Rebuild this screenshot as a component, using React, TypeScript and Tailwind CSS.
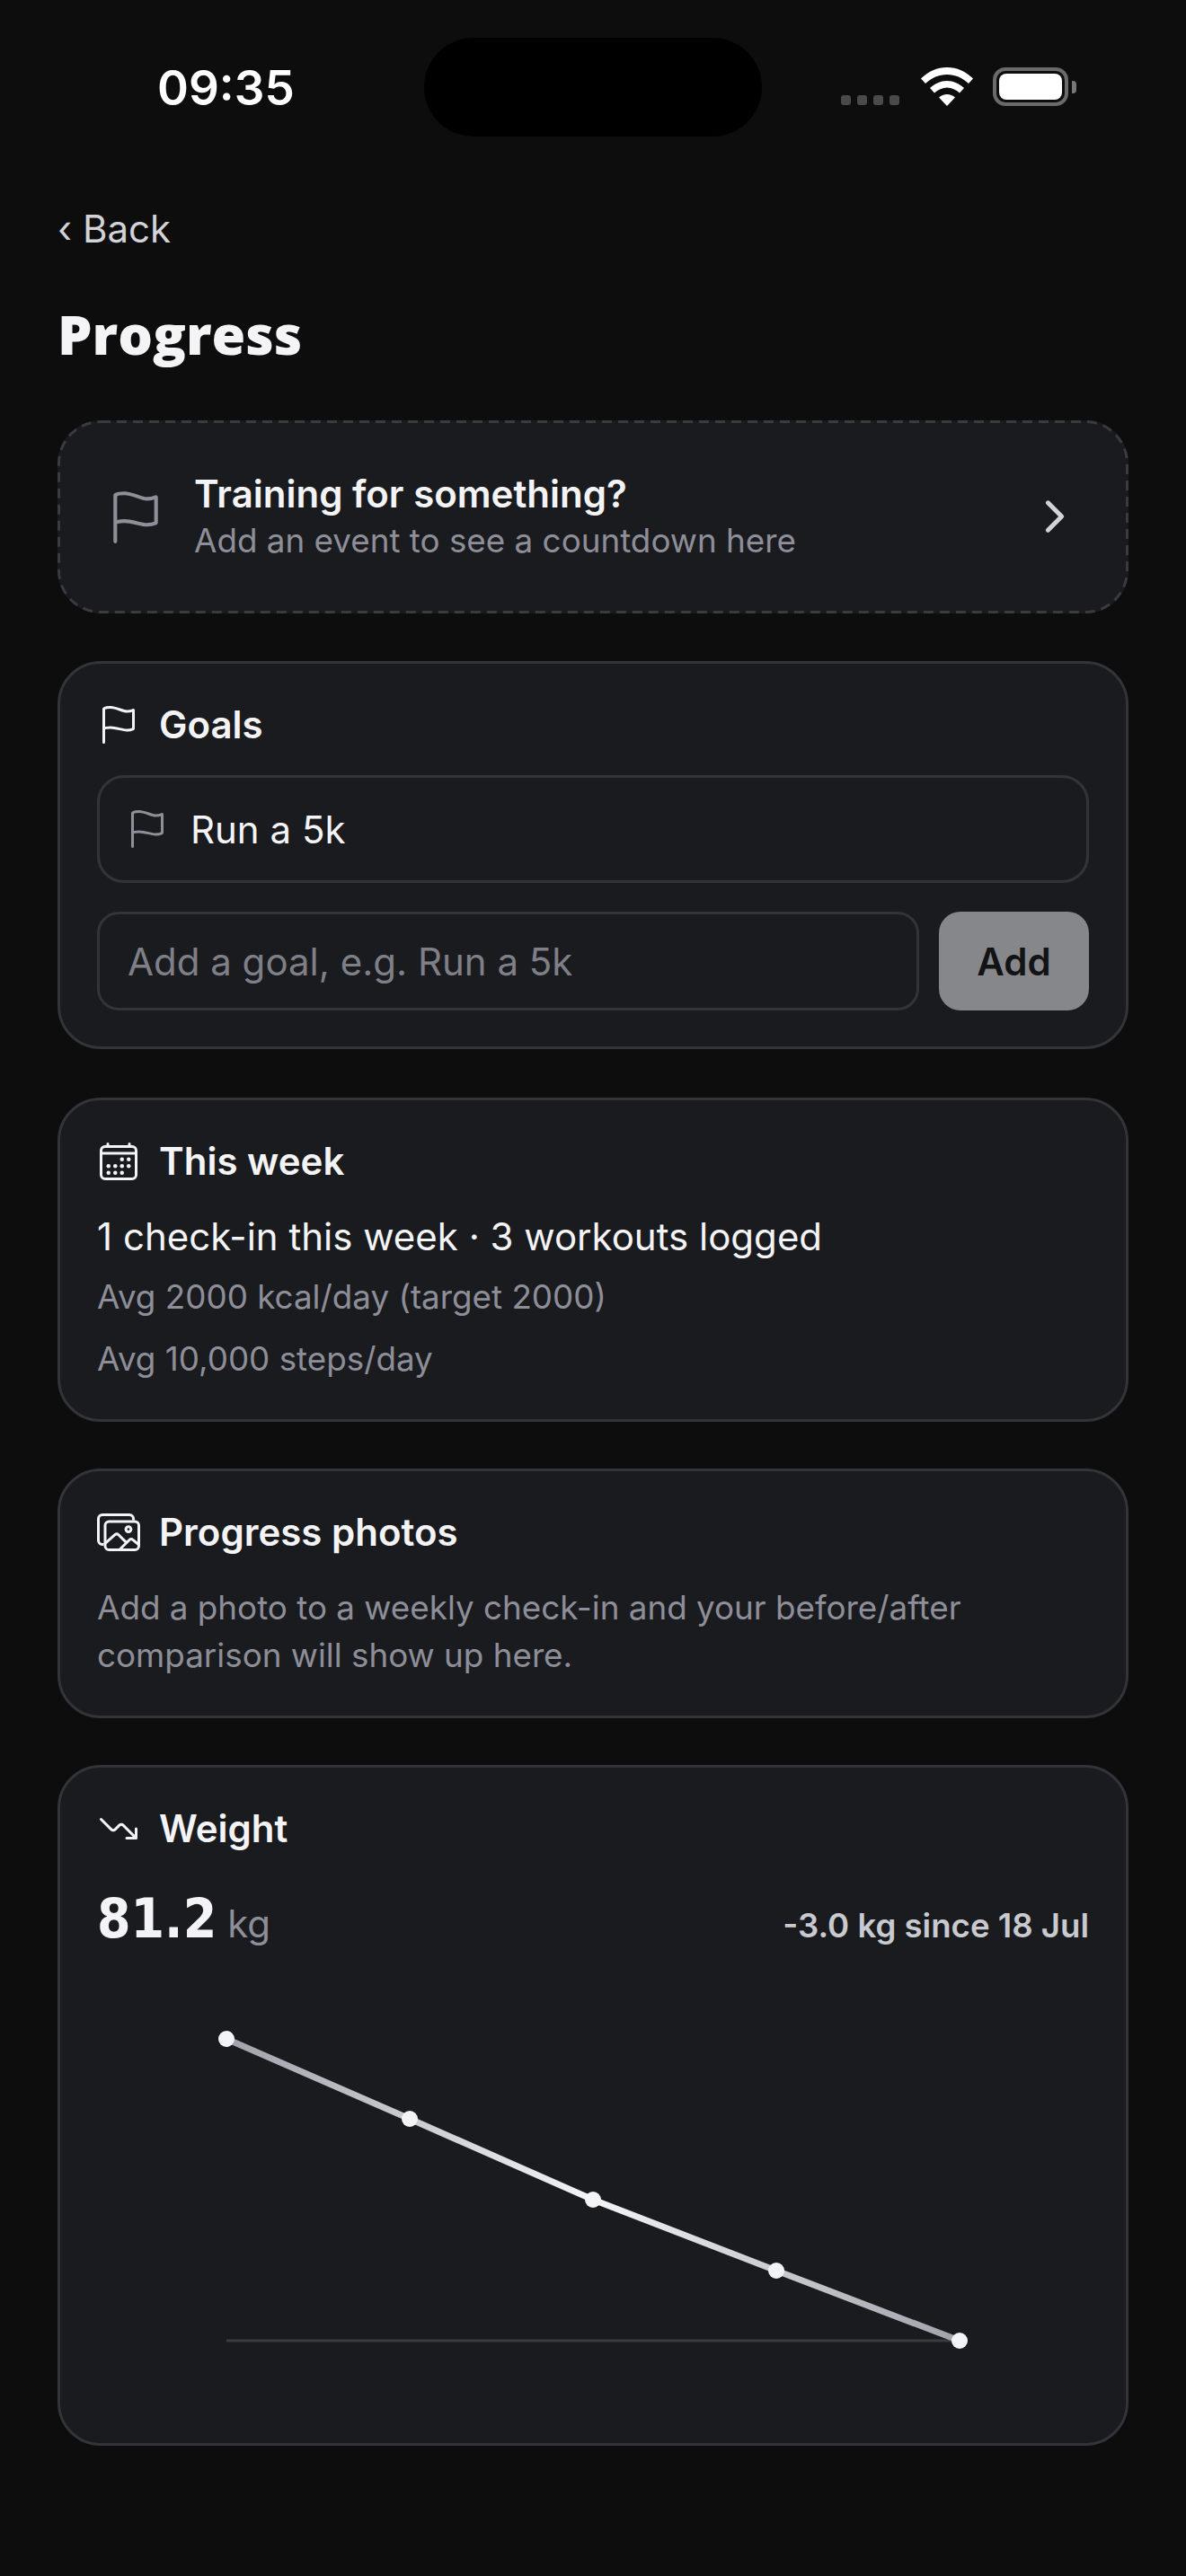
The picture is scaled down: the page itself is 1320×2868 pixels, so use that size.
import { IoCalendarOutline, IoChevronForward, IoFlagOutline, IoImagesOutline, IoTrendingDownOutline } from 'react-icons/io5';

const points = [
  [12, 12],
  [216, 101],
  [420, 191],
  [624, 270],
  [828, 348],
];

function StatusBar() {
  return (
    <div className="relative flex h-[231px] items-start justify-between pl-[175px] pr-[122px] pt-[65px]">
      <span className="text-[53px] font-semibold leading-[66px] text-white">09:35</span>
      <div className="absolute left-[472px] top-[42px] h-[110px] w-[376px] rounded-[55px] bg-black" />
      <div className="mt-[10px] flex items-end">
        <div className="mb-px flex gap-[7px]">
          <div className="h-[11px] w-[11px] rounded-[3px] bg-[#4a4a4a]" />
          <div className="h-[11px] w-[11px] rounded-[3px] bg-[#4a4a4a]" />
          <div className="h-[11px] w-[11px] rounded-[3px] bg-[#4a4a4a]" />
          <div className="h-[11px] w-[11px] rounded-[3px] bg-[#4a4a4a]" />
        </div>
        <svg className="ml-[24px]" width="58" height="43" viewBox="0 0 58 43" fill="#fff">
          <path d="M29 0C18 0 8 4.500 0 12.500L5 18C12 11.500 20 8 29 8C38 8 46 11.500 53 18L58 12.500C50 4.500 40 0 29 0Z" />
          <path d="M29 15C22 15 15.500 18 10 23L15 28.500C19 25 24 22.500 29 22.500C34 22.500 39 25 43 28.500L48 23C42.500 18 36 15 29 15Z" />
          <path d="M29 30C25.500 30 22.500 31.500 20 33.500L29 43L38 33.500C35.500 31.500 32.500 30 29 30Z" />
        </svg>
        <div className="ml-[22px] flex items-center">
          <div className="h-[43px] w-[84px] rounded-[14px] border-[4px] border-[#6a6a6a] p-[3px]">
            <div className="h-full w-full rounded-[8px] bg-white" />
          </div>
          <div className="ml-[4px] h-[14px] w-[5px] rounded-r-[4px] bg-[#777777]" />
        </div>
      </div>
    </div>
  );
}

function CardTitle({ icon, title }: { icon: React.ReactNode; title: string }) {
  return (
    <div className="flex h-[48px] items-center">
      <div className="flex w-[69px] shrink-0 items-center text-[#f4f4f6]">{icon}</div>
      <span className="text-[42px] font-semibold leading-[48px] text-[#f4f4f6]">{title}</span>
    </div>
  );
}

function Card({ children }: { children: React.ReactNode }) {
  return <div className="rounded-[48px] border-[3px] border-[#33343a] bg-[#1a1b1f] px-[41px] pt-[44px]">{children}</div>;
}

export default function App() {
  return (
    <div className="h-[2868px] bg-[#0d0d0e] font-['Inter',sans-serif]">
      <StatusBar />
      <div className="px-[64px]">
        <div className="h-[48px] text-[42px] leading-[48px] text-[#d2d3d8]">‹ Back</div>
        <h1 className="mt-[57px] font-['Open_Sans',sans-serif] text-[61px] font-extrabold leading-[72px] text-[#f4f4f6]">Progress</h1>

        {/* dashes are longer than what border-dashed gives at this width, so the outline is drawn */}
        <div className="relative mt-[60px] flex h-[215px] items-center rounded-[48px] bg-[#1a1b1f] pl-[54px] pr-[55px]">
          <svg className="absolute inset-0" width="1192" height="215" viewBox="0 0 1192 215" fill="none">
            <rect x="1.500" y="1.500" width="1189" height="212" rx="46.500" stroke="#3a3b41" strokeWidth="3" strokeDasharray="11 7" />
          </svg>
          <IoFlagOutline size={66} className="text-[#8e8f98]" />
          <div className="ml-[32px] flex-1">
            <div className="mb-[4px] text-[42px] font-semibold leading-[48px] text-[#f4f4f6]">Training for something?</div>
            <div className="text-[36.800px] leading-[48px] text-[#8e8e98]">Add an event to see a countdown here</div>
          </div>
          <IoChevronForward size={54} className="-translate-y-px text-[#d2d3d8]" />
        </div>

        <div className="mt-[53px]">
          <Card>
            <CardTitle icon={<IoFlagOutline size={48} />} title="Goals" />
            <div className="mt-[32px] flex h-[120px] items-center rounded-[30px] border-[3px] border-[#33343a] pl-[29px]">
              <IoFlagOutline size={48} className="text-[#8e8f98]" />
              <span className="ml-[24px] text-[42px] text-[#f4f4f6]">Run a 5k</span>
            </div>
            <div className="mt-[32px] mb-[40px] flex gap-[22px]">
              <div className="flex h-[110px] flex-1 items-center rounded-[24px] border-[3px] border-[#33343a] pl-[31px] text-[42px] text-[#7f7f88]">
                Add a goal, e.g. Run a 5k
              </div>
              <div className="flex h-[110px] w-[167px] items-center justify-center rounded-[24px] bg-[#85878b] text-[42px] font-semibold text-[#131316]">
                Add
              </div>
            </div>
          </Card>
        </div>

        <div className="mt-[54px]">
          <Card>
            <CardTitle icon={<IoCalendarOutline size={48} />} title="This week" />
            <div className="mt-[30px] text-[42px] leading-[60px] text-[#f4f4f6]">1 check-in this week · 3 workouts logged</div>
            <div className="mt-[10px] text-[36.800px] leading-[54px] text-[#8e8e98]">Avg 2000 kcal/day (target 2000)</div>
            <div className="mt-[15px] pb-[40px] text-[36.800px] leading-[54px] text-[#8e8e98]">Avg 10,000 steps/day</div>
          </Card>
        </div>

        <div className="mt-[52px]">
          <Card>
            <CardTitle icon={<IoImagesOutline size={48} />} title="Progress photos" />
            <p className="mt-[33px] pb-[41px] text-[36.800px] leading-[53px] text-[#8e8e98]">
              Add a photo to a weekly check-in and your before/after comparison will show up here.
            </p>
          </Card>
        </div>

        <div className="mt-[52px]">
          <Card>
            <CardTitle icon={<IoTrendingDownOutline size={48} />} title="Weight" />
            <div className="mt-[31px] flex items-baseline justify-between">
              <div>
                <span className="font-['DejaVu_Sans',sans-serif] text-[60px] font-bold font-stretch-condensed text-[#f4f4f6]">81.2</span>
                <span className="ml-[12px] text-[42px] text-[#8e8e98]">kg</span>
              </div>
              <span className="text-[36.600px] font-semibold text-[#c9cad0]">-3.0 kg since 18 Jul</span>
            </div>
            <svg className="ml-[132px] mt-[77px] mb-[90px] block" width="850" height="372" viewBox="0 0 850 372" fill="none">
              <defs>
                <linearGradient id="weightLine" x1="12" y1="0" x2="828" y2="0" gradientUnits="userSpaceOnUse">
                  <stop offset="0" stopColor="#9fa2aa" />
                  <stop offset="0.5" stopColor="#f4f4f6" />
                  <stop offset="1" stopColor="#9fa2aa" />
                </linearGradient>
              </defs>
              <line x1="12" y1="348" x2="828" y2="348" stroke="#3a3b41" strokeWidth="3" />
              <polyline points={points.map((p) => p.join(',')).join(' ')} stroke="url(#weightLine)" strokeWidth="7" />
              {points.map((p) => (
                <circle key={p[0]} cx={p[0]} cy={p[1]} r="9" fill="#f4f4f6" />
              ))}
            </svg>
          </Card>
        </div>
      </div>
    </div>
  );
}
